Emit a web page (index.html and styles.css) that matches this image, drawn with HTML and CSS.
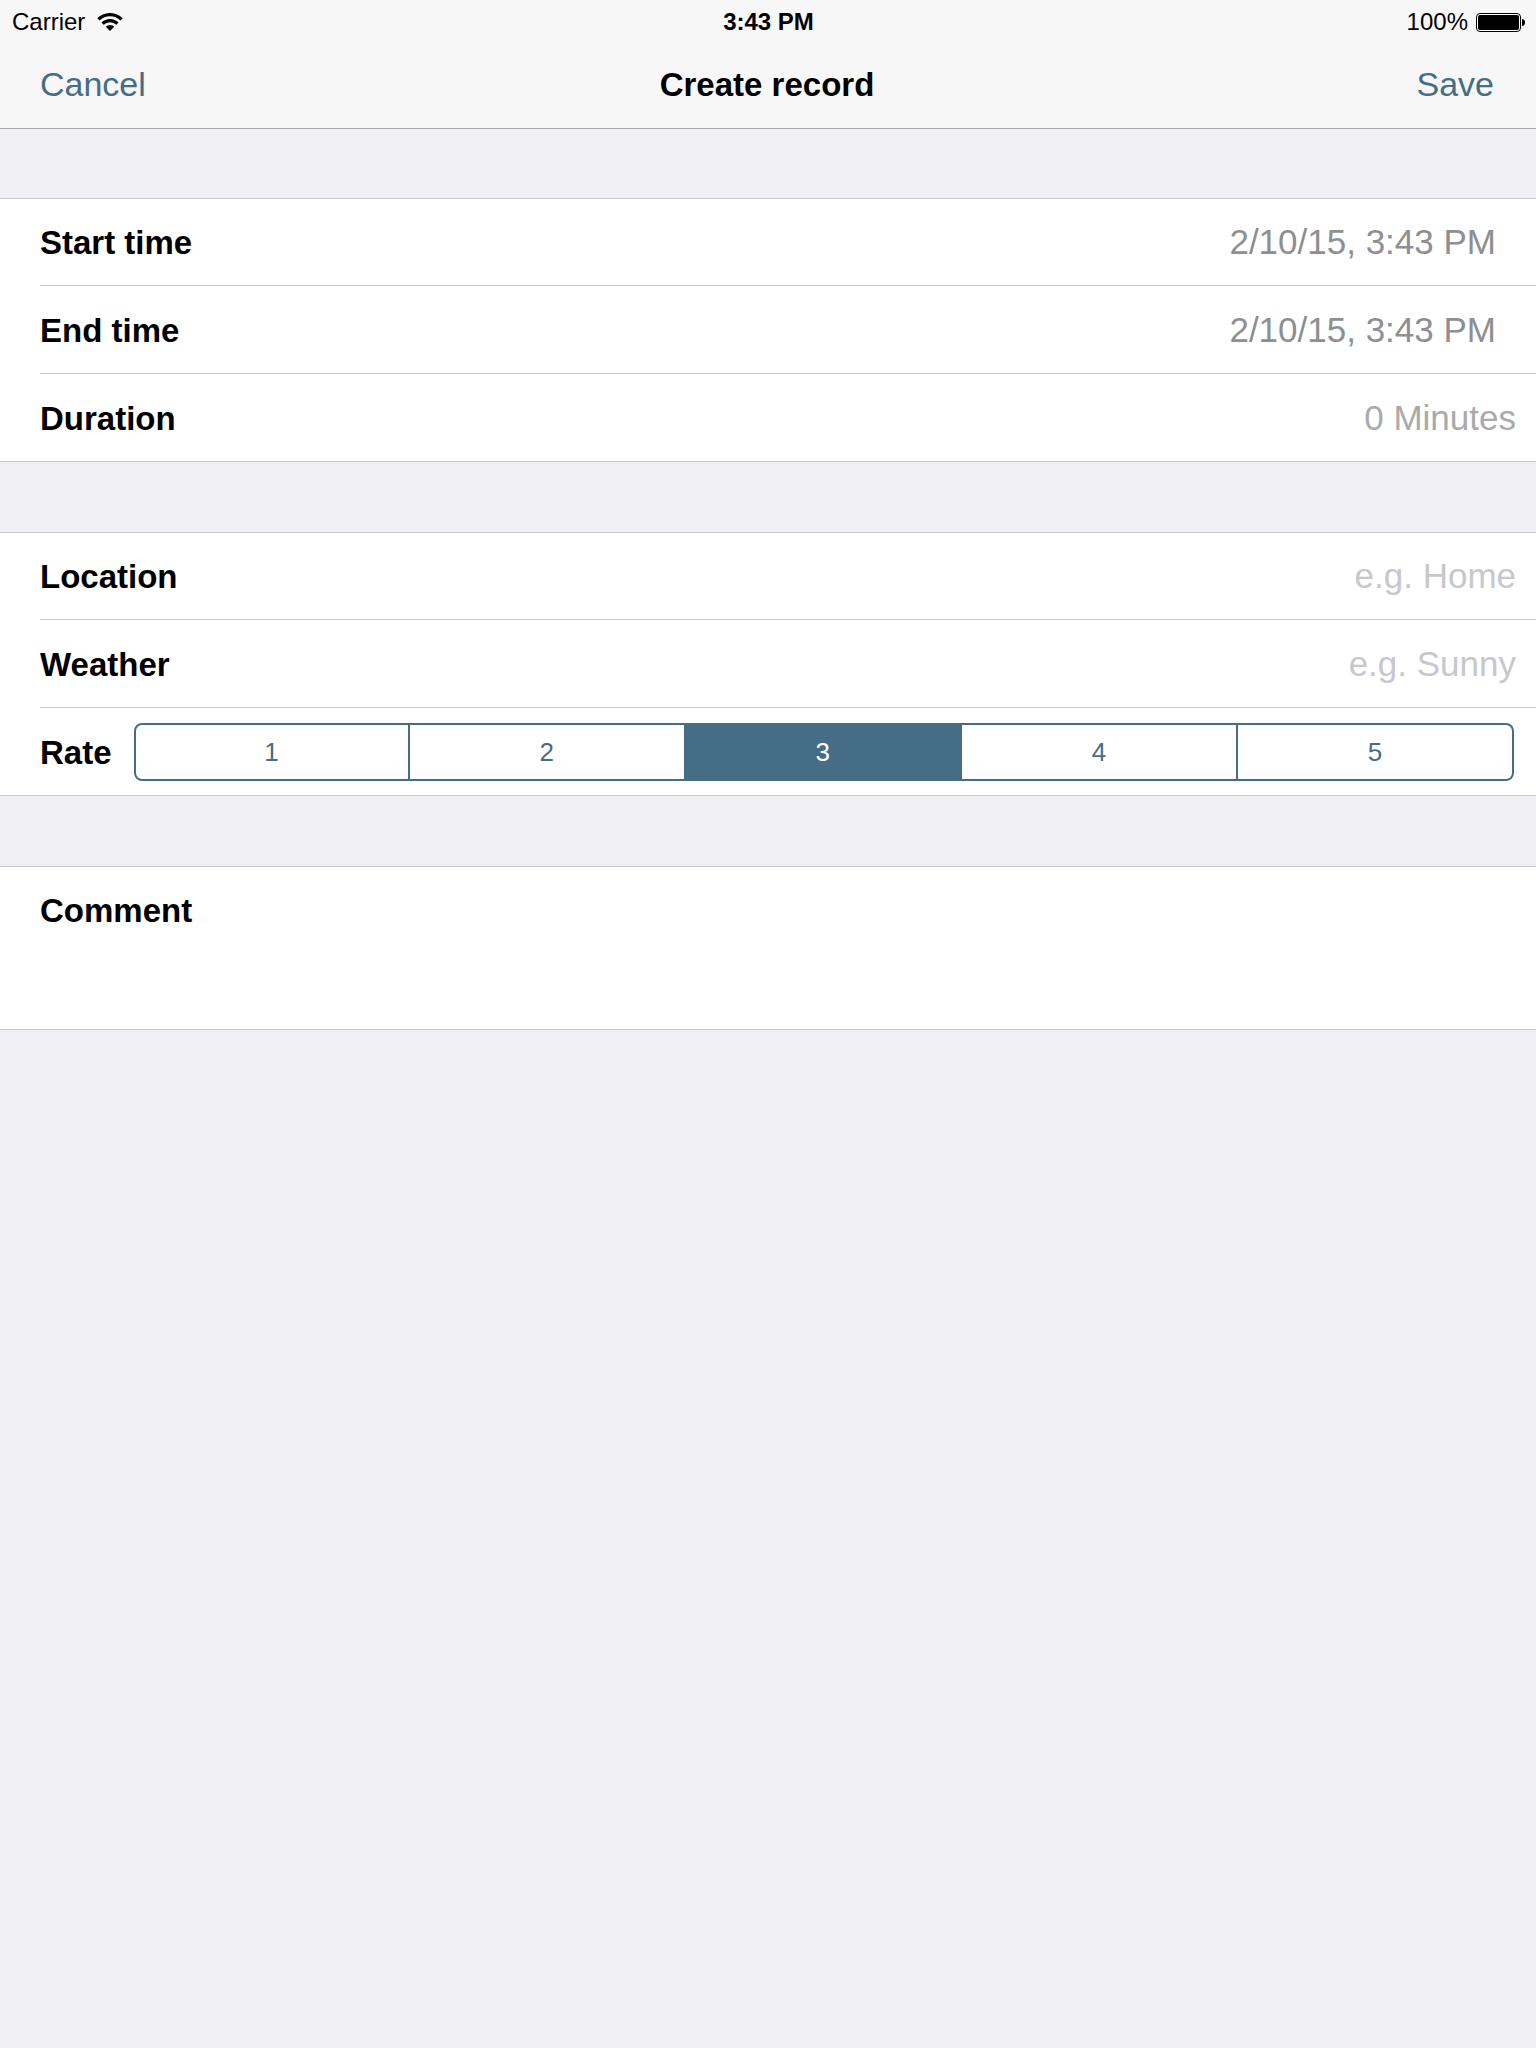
FILE: index.html
```html
<!DOCTYPE html>
<html lang="en">
<head>
<meta charset="utf-8">
<meta name="viewport" content="width=device-width, initial-scale=1">
<title>Create record</title>
<link rel="stylesheet" href="styles.css">
</head>
<body>
<form class="screen">
  <header class="header">
    <div class="status">
      <div class="status-left">
        <span>Carrier</span>
        <svg class="wifi" width="26" height="18" viewBox="0 0 26 18" aria-hidden="true">
          <g fill="none" stroke="#000" stroke-width="3.2">
            <path d="M1.4 6.4A16.4 16.4 0 0 1 24.6 6.4"/>
            <path d="M5.6 10.6A10.5 10.5 0 0 1 20.4 10.6"/>
          </g>
          <path d="M13 18L8.8 13.8A5.9 5.9 0 0 1 17.2 13.8Z"/>
        </svg>
      </div>
      <div class="status-time">3:43 PM</div>
      <div class="status-right">
        <span>100%</span>
        <svg width="49" height="19" viewBox="0 0 49 19" aria-hidden="true">
          <rect x=".5" y=".5" width="44" height="18" rx="3.5" fill="#fff" stroke="#000"/>
          <rect x="2" y="2" width="41" height="15" rx="2"/>
          <path d="M46 6C48 6 49 7.500 49 9.500S48 13 46 13Z"/>
        </svg>
      </div>
    </div>
    <nav class="nav">
      <button class="nav-button" type="button">Cancel</button>
      <h1 class="title">Create record</h1>
      <button class="nav-button nav-save" type="submit">Save</button>
    </nav>
  </header>

  <main class="groups">
    <section class="group">
      <div class="row">
        <label class="label" for="start">Start time</label>
        <input class="field field-date" id="start" type="text" value="2/10/15, 3:43 PM" readonly>
      </div>
      <div class="row">
        <label class="label" for="end">End time</label>
        <input class="field field-date" id="end" type="text" value="2/10/15, 3:43 PM" readonly>
      </div>
      <div class="row">
        <label class="label" for="duration">Duration</label>
        <input class="field field-duration" id="duration" type="text" value="0 Minutes" readonly>
      </div>
    </section>

    <section class="group">
      <div class="row">
        <label class="label" for="location">Location</label>
        <input class="field" id="location" type="text" placeholder="e.g. Home">
      </div>
      <div class="row">
        <label class="label" for="weather">Weather</label>
        <input class="field" id="weather" type="text" placeholder="e.g. Sunny">
      </div>
      <div class="row" role="radiogroup" aria-labelledby="rate">
        <span class="label" id="rate">Rate</span>
        <div class="segments">
          <label class="segment"><input type="radio" name="rate" value="1">1</label>
          <label class="segment"><input type="radio" name="rate" value="2">2</label>
          <label class="segment"><input type="radio" name="rate" value="3" checked>3</label>
          <label class="segment"><input type="radio" name="rate" value="4">4</label>
          <label class="segment"><input type="radio" name="rate" value="5">5</label>
        </div>
      </div>
    </section>

    <section class="group">
      <div class="row row-comment">
        <label class="label" for="comment">Comment</label>
        <textarea class="field comment" id="comment"></textarea>
      </div>
    </section>
  </main>
</form>
</body>
</html>
```

FILE: styles.css
```css
:root {
  --tint: #466d86;
  --line: #c8c7cc;
  --background: #efeff4;
}

* {
  box-sizing: border-box;
}

body {
  margin: 0;
  background: var(--background);
  color: #000;
  font: 34px/40px "Liberation Sans", Helvetica, Arial, sans-serif;
}

button,
input,
textarea {
  margin: 0;
  padding: 0;
  border: 0;
  background: none;
  color: inherit;
  font: inherit;
}

.header {
  background: #f7f7f7;
  border-bottom: 1px solid #a7a7ab;
}

.status,
.nav {
  display: grid;
  grid-template-columns: 1fr auto 1fr;
  align-items: center;
}

.status {
  height: 40px;
  padding: 2px 11px 0 12px;
  font-size: 24px;
}

.status-left,
.status-right {
  display: flex;
  align-items: center;
  gap: 12px;
}

.status-right {
  justify-content: flex-end;
  gap: 8px;
}

.status-time {
  font-weight: bold;
}

.nav {
  height: 88px;
  padding: 0 42px 0 40px;
}

.nav-button {
  justify-self: start;
  color: var(--tint);
  cursor: pointer;
}

.nav-save {
  justify-self: end;
}

.title,
.label {
  margin: 0;
  padding-top: 2px;
  font-size: 33px;
  font-weight: bold;
}

.groups {
  display: flex;
  flex-direction: column;
  gap: 70px;
  padding: 69px 0;
}

.group {
  padding-left: 40px;
  background: #fff;
  border: solid var(--line);
  border-width: 1px 0;
}

.row {
  display: flex;
  align-items: center;
  gap: 22px;
  min-height: 88px;
  padding-right: 20px;
  border-bottom: 1px solid var(--line);
}

.row:first-child {
  min-height: 87px;
}

.row:last-child {
  min-height: 87px;
  border-bottom: 0;
}

.field {
  flex: 1;
  min-width: 0;
  height: 40px;
  outline: 0;
  font-size: 35px;
  text-align: right;
}

.field::placeholder {
  color: #c7c7cd;
  opacity: 1;
}

.field-date {
  padding-right: 20px;
  color: #8e8e93;
}

.field-duration {
  color: #aaa;
}

.segments {
  flex: 1;
  display: grid;
  grid-template-columns: repeat(5, 1fr);
  height: 58px;
  margin-right: 2px;
}

.segment {
  display: flex;
  align-items: center;
  justify-content: center;
  border: 2px solid var(--tint);
  border-left-width: 0;
  color: var(--tint);
  font-size: 26px;
  cursor: pointer;
}

.segment:first-child {
  border-left-width: 2px;
  border-radius: 8px 0 0 8px;
}

.segment:last-child {
  border-radius: 0 8px 8px 0;
}

.segment:has(:checked) {
  background: var(--tint);
  color: #fff;
}

.segment input {
  appearance: none;
  width: 0;
  height: 0;
  margin: 0;
}

.row-comment {
  align-items: flex-start;
  padding-top: 22px;
}

.comment {
  height: 140px;
  resize: none;
  text-align: left;
}
```
